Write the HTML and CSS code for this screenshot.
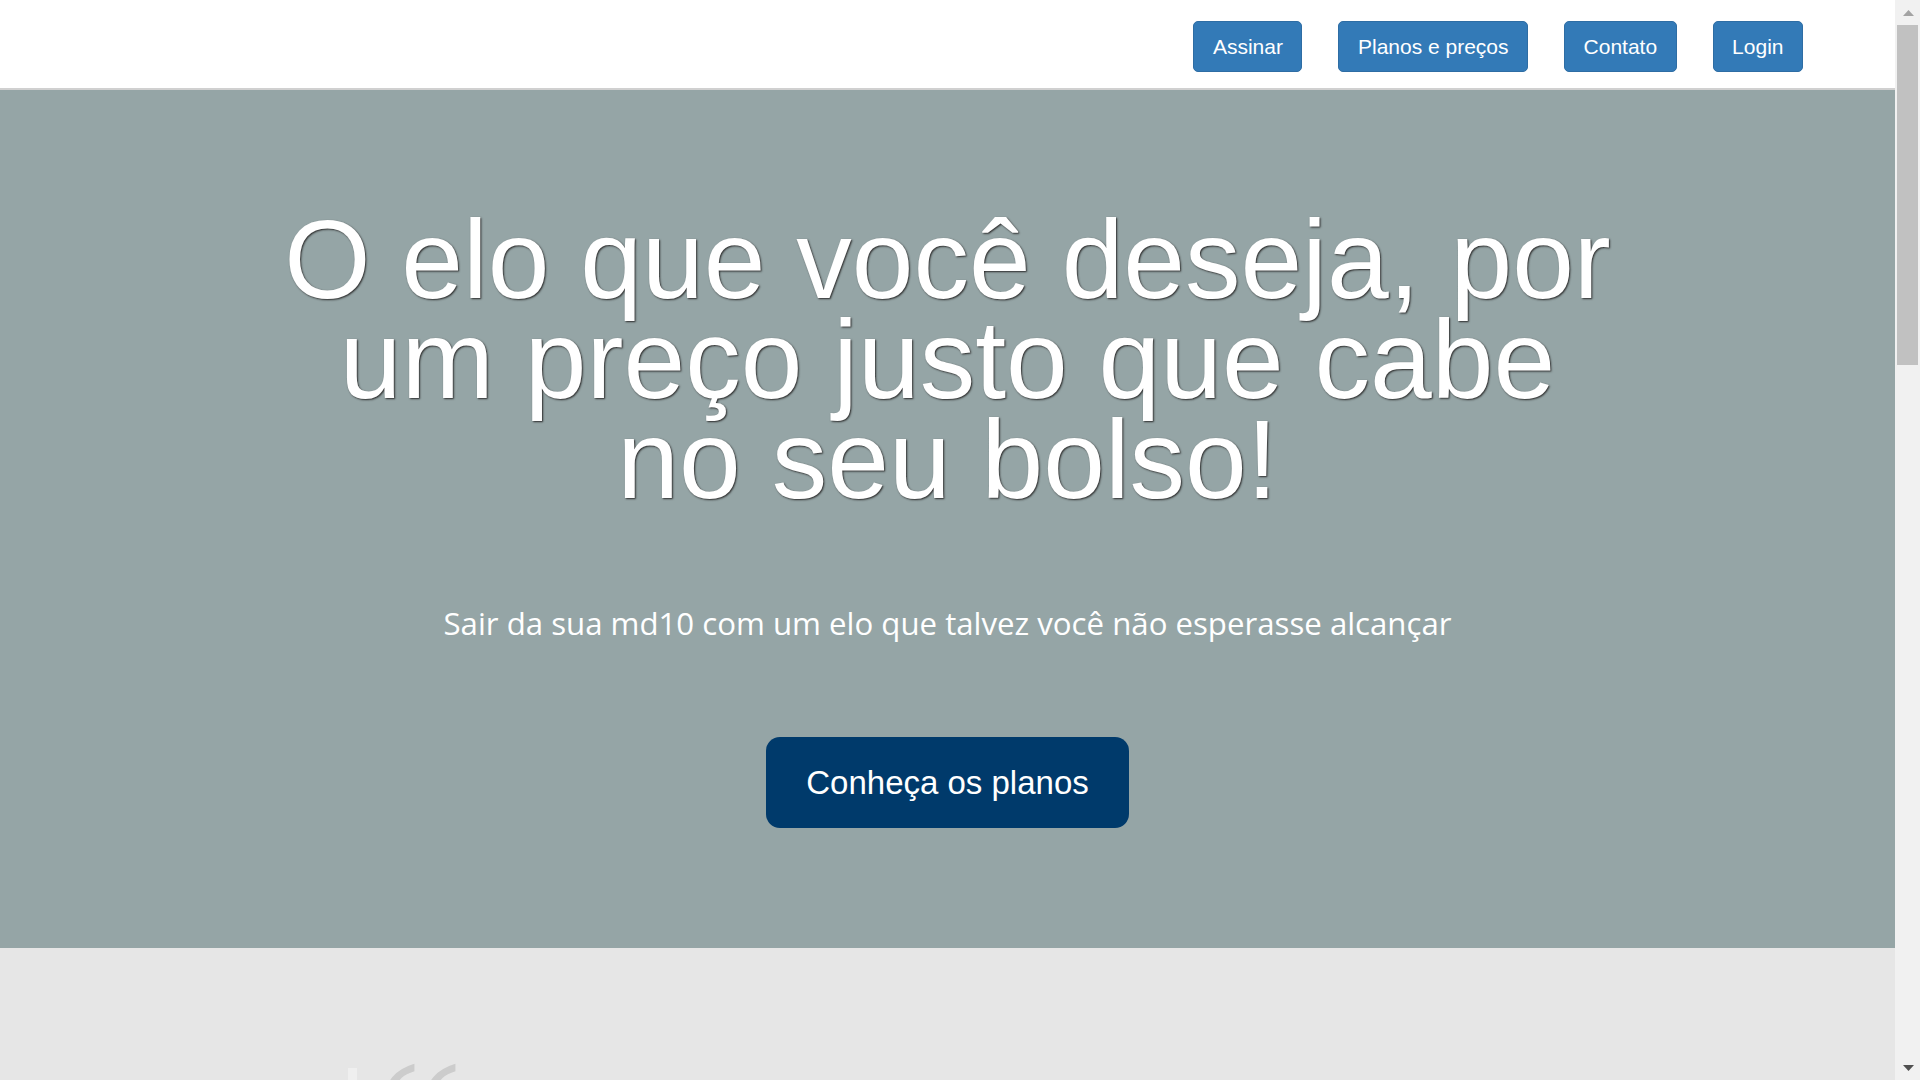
FILE: index.html
```html
<!DOCTYPE html>
<html lang="pt-BR">
<head>
<meta charset="utf-8">
<title>Elo justo</title>
<link rel="stylesheet" href="styles.css">
</head>
<body>
<header class="topbar">
  <nav class="nav">
    <a class="nav-btn" href="#">Assinar</a>
    <a class="nav-btn" href="#">Planos e preços</a>
    <a class="nav-btn" href="#">Contato</a>
    <a class="nav-btn" href="#">Login</a>
  </nav>
</header>

<section class="hero">
  <h1 class="hero-title">O elo que você deseja, por um preço justo que cabe no seu bolso!</h1>
  <p class="hero-sub">Sair da sua md10 com um elo que talvez você não esperasse alcançar</p>
  <a class="cta" href="#">Conheça os planos</a>
</section>

<section class="testimonials">
  <blockquote class="quote">
    <span class="quote-mark">“</span>
    <p class="quote-text">&nbsp;</p>
  </blockquote>
</section>

<div class="scrollbar" aria-hidden="true">
  <div class="sb-btn">
    <svg width="11" height="6" viewBox="0 0 11 6"><polygon points="0,6 11,6 5.5,0" fill="#a3a3a3"/></svg>
  </div>
  <div class="sb-track">
    <div class="sb-thumb"></div>
  </div>
  <div class="sb-btn">
    <svg width="11" height="6" viewBox="0 0 11 6"><polygon points="0,0 11,0 5.5,6" fill="#505050"/></svg>
  </div>
</div>
</body>
</html>
```

FILE: styles.css
```css
html, body {
  margin: 0;
  padding: 0;
}

body {
  font-family: "Liberation Sans", Arial, sans-serif;
  background: #e6e6e6;
  margin-right: 25px;
}

.scrollbar {
  position: fixed;
  top: 0;
  right: 0;
  width: 25px;
  height: 100vh;
  background: #f1f1f1;
  display: flex;
  flex-direction: column;
}

.sb-btn {
  height: 25px;
  display: flex;
  align-items: center;
  justify-content: center;
  flex: none;
}

.sb-btn svg {
  display: block;
  margin-left: 1px;
}

.sb-track {
  flex: 1;
  padding: 0 2px;
}

.sb-thumb {
  height: 340px;
  background: #c1c1c1;
}

.topbar {
  background: #ffffff;
  height: 88px;
  border-bottom: 2px solid #d0d0d0;
  box-sizing: content-box;
}

.nav {
  display: flex;
  justify-content: flex-end;
  gap: 36px;
  padding: 21px 92px 0 0;
}

.nav-btn {
  display: inline-block;
  font-family: "Liberation Sans", Arial, sans-serif;
  font-size: 21px;
  line-height: 23px;
  padding: 13px 18.5px;
  color: #ffffff;
  background: #337ab7;
  border: 1px solid #2e6da4;
  border-radius: 5px;
  text-decoration: none;
}

.hero {
  background: #95a5a6;
  padding: 120px 0;
  text-align: center;
}

.hero-title {
  max-width: 1355px;
  margin: 0 auto;
  font-family: "Liberation Sans", Arial, sans-serif;
  font-weight: normal;
  font-size: 111px;
  line-height: 100px;
  color: #ffffff;
  text-shadow: 1px 1px 2px #2a2a2a;
}

.hero-sub {
  margin: 91px 0 0;
  font-family: "Open Sans", "Noto Sans", sans-serif;
  font-size: 31.2px;
  line-height: 45px;
  color: #ffffff;
}

.cta {
  display: inline-block;
  margin-top: 91px;
  padding: 26px 40px;
  font-family: "Liberation Sans", Arial, sans-serif;
  font-size: 33px;
  line-height: 39px;
  color: #ffffff;
  background: #003a6b;
  border-radius: 14px;
  text-decoration: none;
}

.testimonials {
  background: #e6e6e6;
  padding: 120px 0 0 348px;
  height: 2204px;
}

.quote {
  position: relative;
  margin: 0;
  border-left: 9px solid #efefef;
  padding: 200px 0 0 30px;
  width: 1200px;
  min-height: 300px;
}

.quote-mark {
  position: absolute;
  top: -38px;
  left: 18px;
  font-family: "Liberation Serif", "Times New Roman", serif;
  font-size: 200px;
  line-height: 200px;
  color: #cccccc;
}

.quote-text {
  margin: 0;
  font-family: "Open Sans", sans-serif;
  font-size: 24px;
  color: #555555;
}
```
